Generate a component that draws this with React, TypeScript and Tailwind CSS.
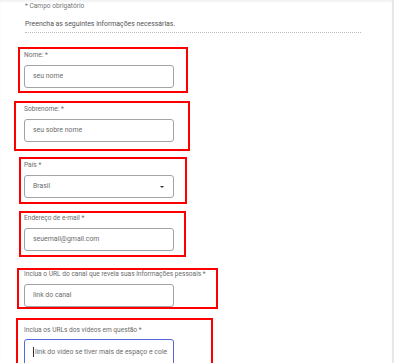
import React from 'react';

const font = { fontFamily: 'Roboto, "Noto Sans", sans-serif' };

interface FieldProps {
    label: string;
    placeholder: string;
    box: string;
    inputClass?: string;
    select?: boolean;
    focused?: boolean;
}

const Field: React.FC<FieldProps> = ({ label, placeholder, box, inputClass = '', select, focused }) => {
    return (
        <div className={`flex flex-col border-2 border-[#ff0000] ${box}`}>
            <span className="whitespace-nowrap text-[6.6px] leading-[9px] text-[#6b6b6b]">{label}</span>
            <div
                className={`flex h-[23px] w-[150px] items-center justify-between rounded-[3px] border pl-[8px] pr-[9px] ${
                    focused ? 'border-[#5566d9]' : 'border-[#a3a3a3]'
                } ${inputClass}`}
            >
                <span className="flex items-center whitespace-nowrap text-[6.9px] text-[#6e6e6e]">
                    {focused && <span className="mr-[1px] h-[10px] w-[1px] bg-[#333]"></span>}
                    {placeholder}
                </span>
                {select && (
                    <span className="h-0 w-0 border-x-[2px] border-t-[2.5px] border-x-transparent border-t-[#333]"></span>
                )}
            </div>
        </div>
    );
};

export default function App() {
    return (
        <div className="h-[363px] w-[400px] overflow-hidden bg-white" style={font}>
            <div className="h-full w-[394px] border-r-2 border-[#e8e8e8] shadow-[inset_0_2px_2px_rgba(0,0,0,0.05)]">
                {/* Header */}
                <div className="pl-[25px] pt-[2px]">
                    <p className="text-[6.6px] leading-[9px] text-[#777]">* Campo obrigatório</p>
                    <p className="mt-[9px] text-[6.9px] leading-[9px] text-[#555]">
                        Preencha as seguintes informações necessárias.
                    </p>
                    <div className="mt-[3px] w-[336px] border-t border-dotted border-[#bdbdbd]"></div>
                </div>

                {/* Fields */}
                <div className="flex flex-col items-start">
                    <Field
                        label="Nome: *"
                        placeholder="seu nome"
                        box="ml-[18px] mt-[14px] h-[46px] w-[170px] pl-[4px] pt-[2px]"
                        inputClass="mt-[5px]"
                    />
                    <Field
                        label="Sobrenome: *"
                        placeholder="seu sobre nome"
                        box="ml-[14px] mt-[8px] h-[50px] w-[176px] pl-[8px] pt-[2px]"
                        inputClass="mt-[5px]"
                    />
                    <Field
                        label="País *"
                        placeholder="Brasil"
                        select
                        box="ml-[19px] mt-[6px] h-[47px] w-[168px] pl-[3px] pt-[2px]"
                        inputClass="mt-[5px] h-[21px] pl-[6px]"
                    />
                    <Field
                        label="Endereço de e-mail *"
                        placeholder="seuemail@gmail.com"
                        box="ml-[19px] mt-[7px] h-[46px] w-[167px] pl-[3px] pt-[1px]"
                        inputClass="mt-[5px]"
                    />
                    <Field
                        label="Inclua o URL do canal que revela suas informações pessoais *"
                        placeholder="link do canal"
                        box="ml-[17px] mt-[11px] h-[41px] w-[201px] pl-[5px] pt-0"
                        inputClass="mt-[5px]"
                    />
                    <Field
                        label="Inclua os URLs dos vídeos em questão *"
                        placeholder="link do vídeo se tiver mais de espaço e cole"
                        focused
                        box="ml-[16px] mt-[9px] h-[50px] w-[197px] pl-[6px] pt-[6px]"
                        inputClass="mt-[4px] h-[28px] rounded-b-none"
                    />
                </div>
            </div>
        </div>
    );
}
